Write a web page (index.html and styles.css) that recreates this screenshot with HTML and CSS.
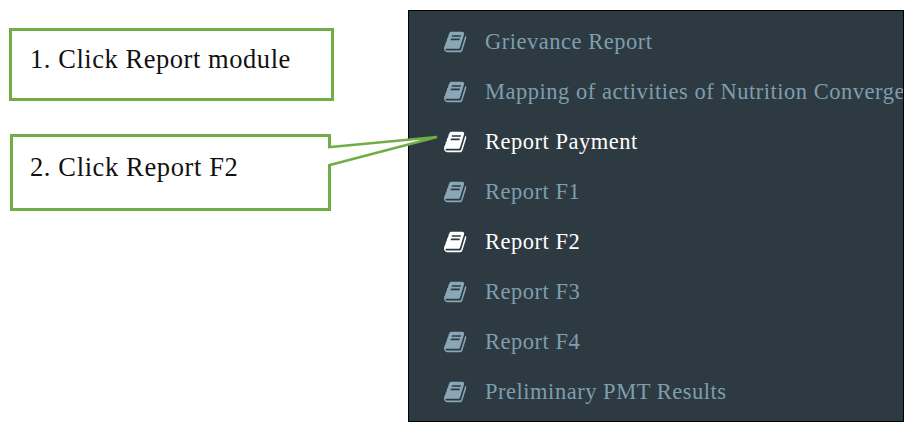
FILE: index.html
```html
<!DOCTYPE html>
<html lang="en">
<head>
  <meta charset="UTF-8" />
  <title>Report module steps</title>
  <link rel="stylesheet" href="styles.css">
</head>
<body>
  <svg width="0" height="0" class="defs">
    <symbol id="book" viewBox="0 0 1792 1792">
      <path d="M1639 478q40 57 18 129l-275 906q-19 64-76.5 107.5t-122.5 43.5h-923q-77 0-148.5-53.5t-99.5-131.5q-24-67-2-127 0-4 3-27t4-37q1-8-3-21.5t-3-19.5q2-11 8-21t16.5-23.5 16.5-23.5q23-38 45-91.5t30-91.5q3-10 .5-30t-.5-28q3-11 17-28t17-23q21-36 42-92t25-90q1-9-2.5-32t.5-28q4-13 22-30.5t22-22.5q19-26 42.5-84.5t27.5-96.5q1-8-3-25.5t-2-26.5q2-8 9-18t18-23 17-21q8-12 16.5-30.5t15-35 16-36 19.5-32 26.5-23.5 36-11.5 47.5 5.5l-1 3q38-9 51-9h761q74 0 114 56t18 130l-274 906q-36 119-71.5 153.5t-128.5 34.5h-869q-27 0-38 15-11 16-1 43 24 70 144 70h923q29 0 56-15.5t35-41.5l300-987q7-22 5-57 38 15 59 43zm-1064 2q-4 13 2 22.5t20 9.5h608q13 0 25.5-9.5t16.5-22.5l21-64q4-13-2-22.5t-20-9.5h-608q-13 0-25.5 9.5t-16.5 22.5zm-83 256q-4 13 2 22.5t20 9.5h608q13 0 25.5-9.5t16.5-22.5l21-64q4-13-2-22.5t-20-9.5h-608q-13 0-25.5 9.5t-16.5 22.5z"/>
    </symbol>
  </svg>
  <div class="page">
    <div class="notes">
      <div class="note note-one">1. Click Report module</div>
      <div class="note note-two">2. Click Report F2</div>
    </div>
    <ul class="menu">
      <li class="item"><svg class="icon"><use href="#book"/></svg><span>Grievance Report</span></li>
      <li class="item"><svg class="icon"><use href="#book"/></svg><span>Mapping of activities of Nutrition Convergence</span></li>
      <li class="item active"><svg class="icon"><use href="#book"/></svg><span>Report Payment</span></li>
      <li class="item"><svg class="icon"><use href="#book"/></svg><span>Report F1</span></li>
      <li class="item active"><svg class="icon"><use href="#book"/></svg><span>Report F2</span></li>
      <li class="item"><svg class="icon"><use href="#book"/></svg><span>Report F3</span></li>
      <li class="item"><svg class="icon"><use href="#book"/></svg><span>Report F4</span></li>
      <li class="item"><svg class="icon"><use href="#book"/></svg><span>Preliminary PMT Results</span></li>
    </ul>
  </div>
  <!-- callout tail, runs from note 2 over to the Report Payment icon -->
  <svg class="tail" width="440" height="60" viewBox="0 0 440 60">
    <path d="M328 17.2 L437 7 L328 35.5" fill="#fff" stroke="#70ad47" stroke-width="2.5"/>
  </svg>
</body>
</html>
```

FILE: styles.css
```css
html, body { margin: 0; padding: 0; background: #fff; overflow: hidden; }
.defs { position: absolute; }
.page { display: flex; height: 432px; width: 913px; }
.notes { width: 408px; padding: 28px 0 0 9px; box-sizing: border-box; }
.note { border: 3px solid #70ad47; box-sizing: border-box; font-family: "Liberation Serif", serif; font-size: 26.5px; color: #111; }
.note-one { width: 325px; height: 73px; padding: 13px 0 0 18px; letter-spacing: .55px; }
.note-two { width: 321px; height: 77px; margin: 33px 0 0 1px; padding: 15px 0 0 17px; letter-spacing: .62px; }
.menu { list-style: none; margin: 10px 0 0; padding: 6px 0 0; width: 496px; height: 412px; box-sizing: border-box; background: #2d3a41; border: 1px solid #000; overflow: hidden; }
.item { display: flex; align-items: center; height: 50px; padding-left: 35px; color: #7f9eae; font-family: "Liberation Serif", serif; font-size: 22.5px; letter-spacing: .52px; white-space: nowrap; }
.item.active { color: #fff; }
.icon { width: 24px; height: 24px; margin-right: 17px; fill: #8aa7b7; flex: none; }
.active .icon { fill: #fff; }
.tail { position: absolute; left: 0; top: 130px; }
```
